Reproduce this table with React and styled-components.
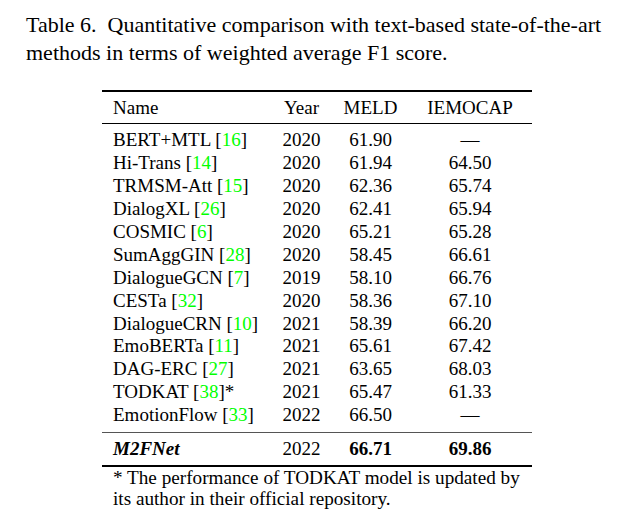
import React from "react";
import styled, { createGlobalStyle } from "styled-components";

const Global = createGlobalStyle`
  html, body { margin: 0; padding: 0; background: #fff; }
  body { font-family: "Liberation Serif", "Times New Roman", serif; color: #000; }
`;

const Page = styled.div`
  width: 624px;
  height: 521px;
  overflow: hidden;
  background: #fff;
`;

const Caption = styled.p`
  margin: 0;
  padding: 11px 0 0 26px;
  width: 590px;
  font-size: 22px;
  line-height: 28px;
`;

const Table = styled.div`
  width: 430px;
  margin: 23px 0 0 102px;
  border-top: 2px solid #000;
  font-size: 19px;
`;

const Row = styled.div`
  display: grid;
  grid-template-columns: 168px 63px 75px 124px;
  align-items: center;
  height: ${(p) => p.$h || 22.9}px;
`;

const Head = styled.div`
  padding-top: 1px;
  border-bottom: 1px solid #000;
`;

const Body = styled.div`
  padding: 5px 0 5px;
  border-bottom: 1.5px solid #555;
`;

const Final = styled.div`
  border-bottom: 2px solid #000;
`;

const NameCell = styled.div`
  padding-left: 11px;
  white-space: nowrap;
  font-style: ${(p) => (p.$strong ? "italic" : "normal")};
  font-weight: ${(p) => (p.$strong ? "bold" : "normal")};
`;

const Cell = styled.div`
  text-align: center;
  white-space: nowrap;
  font-weight: ${(p) => (p.$strong ? "bold" : "normal")};
`;

const Ref = styled.span`
  color: #00ff00;
`;

const Note = styled.p`
  margin: 0;
  padding: 0 6px 0 11px;
  font-size: 19.2px;
  line-height: 21px;
`;

const rows = [
  ["BERT+MTL", "16", "", "2020", "61.90", "—"],
  ["Hi-Trans", "14", "", "2020", "61.94", "64.50"],
  ["TRMSM-Att", "15", "", "2020", "62.36", "65.74"],
  ["DialogXL", "26", "", "2020", "62.41", "65.94"],
  ["COSMIC", "6", "", "2020", "65.21", "65.28"],
  ["SumAggGIN", "28", "", "2020", "58.45", "66.61"],
  ["DialogueGCN", "7", "", "2019", "58.10", "66.76"],
  ["CESTa", "32", "", "2020", "58.36", "67.10"],
  ["DialogueCRN", "10", "", "2021", "58.39", "66.20"],
  ["EmoBERTa", "11", "", "2021", "65.61", "67.42"],
  ["DAG-ERC", "27", "", "2021", "63.65", "68.03"],
  ["TODKAT", "38", "*", "2021", "65.47", "61.33"],
  ["EmotionFlow", "33", "", "2022", "66.50", "—"],
];

export default function App() {
  return (
    <Page>
      <Global />
      <Caption>
        Table 6.&nbsp; Quantitative comparison with text-based state-of-the-art
        methods in terms of weighted average F1 score.
      </Caption>
      <Table>
        <Head>
          <Row $h={30}>
            <NameCell>Name</NameCell>
            <Cell>Year</Cell>
            <Cell>MELD</Cell>
            <Cell>IEMOCAP</Cell>
          </Row>
        </Head>
        <Body>
          {rows.map(([name, ref, star, year, meld, iemo]) => (
            <Row key={name}>
              <NameCell>
                {name} [<Ref>{ref}</Ref>]{star}
              </NameCell>
              <Cell>{year}</Cell>
              <Cell>{meld}</Cell>
              <Cell>{iemo}</Cell>
            </Row>
          ))}
        </Body>
        <Final>
          <Row $h={32}>
            <NameCell $strong>M2FNet</NameCell>
            <Cell>2022</Cell>
            <Cell $strong>66.71</Cell>
            <Cell $strong>69.86</Cell>
          </Row>
        </Final>
        <Note>
          * The performance of TODKAT model is updated by its author in their
          official repository.
        </Note>
      </Table>
    </Page>
  );
}
